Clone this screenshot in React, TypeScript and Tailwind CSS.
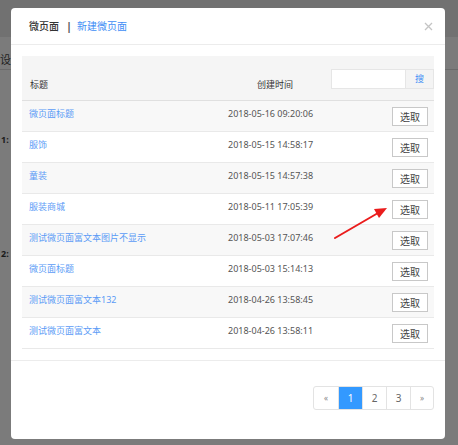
import { useState } from 'react';

interface PageRow {
  id: number;
  title: string;
  created: string;
}

const rows: PageRow[] = [
  { id: 1, title: '微页面标题', created: '2018-05-16 09:20:06' },
  { id: 2, title: '服饰', created: '2018-05-15 14:58:17' },
  { id: 3, title: '童装', created: '2018-05-15 14:57:38' },
  { id: 4, title: '服装商城', created: '2018-05-11 17:05:39' },
  { id: 5, title: '测试微页面富文本图片不显示', created: '2018-05-03 17:07:46' },
  { id: 6, title: '微页面标题', created: '2018-05-03 15:14:13' },
  { id: 7, title: '测试微页面富文本132', created: '2018-04-26 13:58:45' },
  { id: 8, title: '测试微页面富文本', created: '2018-04-26 13:58:11' },
];

const font = { fontFamily: '"Noto Sans", "Noto Sans CJK SC", sans-serif' };

export default function App() {
  const [keyword, setKeyword] = useState('');
  const [page, setPage] = useState(1);

  return (
    <div className="relative h-[445px] w-[458px] overflow-hidden bg-[#7b7b7b]" style={font}>
      {/* dimmed page behind the dialog */}
      <div className="h-[37px] bg-[#717171]" />
      <div className="h-[33px] border-b border-[#6a6a6a] pt-[9px]">
        <span className="text-[11px] leading-none text-[#1e1e1e]">设置</span>
      </div>
      <div className="pl-[1px] pt-[65px] text-[9px] font-bold leading-none text-[#1a1a1a]">1:</div>
      <div className="pl-[1px] pt-[105px] text-[9px] font-bold leading-none text-[#1a1a1a]">2:</div>

      {/* dialog */}
      <div className="absolute left-[11px] top-[8px] flex h-[431px] w-[434px] flex-col rounded-[4px] bg-white">
        <div className="flex h-[37px] items-center border-b border-[#ececec] pl-[18px] pr-[12px]">
          <span className="text-[10px] font-medium text-[#333]">微页面</span>
          <span className="ml-[7px] mr-[5px] text-[11px] font-bold text-[#555]">|</span>
          <span className="text-[10px] text-[#3f8ef5]">新建微页面</span>
          <span className="ml-auto">
            <svg width="9" height="9" viewBox="0 0 9 9">
              <path d="M1 1L8 8M8 1L1 8" stroke="#c4c4c4" strokeWidth="1.3" />
            </svg>
          </span>
        </div>

        <div className="border-b border-[#ececec] px-[11px] pb-[11px] pt-[11px]">
          <div className="grid h-[45px] grid-cols-[206px_103px_1fr] border-b border-[#e0e0e0] bg-[#f5f5f5]">
            <div className="pl-[8px] pt-[22px] text-[9px] text-[#333]">标题</div>
            <div className="pl-[29px] pt-[22px] text-[9px] text-[#333]">创建时间</div>
            <div className="flex pt-[13px]">
              <input
                value={keyword}
                onChange={(e) => setKeyword(e.target.value)}
                className="h-[20px] w-[75px] border border-[#e6e6e6] bg-white px-1 text-[9px] outline-none"
              />
              <button className="h-[20px] flex-1 border border-l-0 border-[#e6e6e6] bg-[#f4f4f4] text-[9px] text-[#3f8ef5]">
                搜
              </button>
            </div>
          </div>

          {rows.map((row, i) => (
            <div
              key={row.id}
              className={`grid h-[31px] grid-cols-[206px_164px_1fr] border-b border-[#e9e9e9] ${
                i % 2 === 0 ? 'bg-[#f8f8f8]' : 'bg-white'
              }`}
            >
              <div className="pl-[7px] pt-[6px] text-[9px] text-[#5b9bf6]">{row.title}</div>
              <div className="pt-[6px] text-[9px] text-[#555]">{row.created}</div>
              <div className="flex items-center pt-[1px]">
                <button className="h-[19px] w-[36px] border border-[#c8c8c8] bg-white text-[10px] leading-none text-[#444]">
                  选取
                </button>
              </div>
            </div>
          ))}
        </div>

        <div className="flex flex-1 items-start justify-end pr-[11px] pt-[25px]">
          <div className="flex h-[24px] overflow-hidden rounded-[3px] border border-[#e3e3e3] text-[10px]">
            <button className="w-[24px] text-[8px] text-[#888]">«</button>
            {[1, 2, 3].map((n) => (
              <button
                key={n}
                onClick={() => setPage(n)}
                className={`w-[24px] border-l border-[#e3e3e3] ${
                  page === n ? 'bg-[#3399ff] text-white' : 'text-[#666]'
                }`}
              >
                {n}
              </button>
            ))}
            <button className="w-[23px] border-l border-[#e3e3e3] text-[8px] text-[#888]">»</button>
          </div>
        </div>
      </div>

      {/* annotation arrow */}
      <svg className="absolute left-0 top-0" width="458" height="445" viewBox="0 0 458 445">
        <path d="M335 238L378 213" stroke="#ea1c1c" strokeWidth="2" strokeLinecap="round" />
        <path d="M387 208L374 209L379 218Z" fill="#ea1c1c" />
      </svg>
    </div>
  );
}
